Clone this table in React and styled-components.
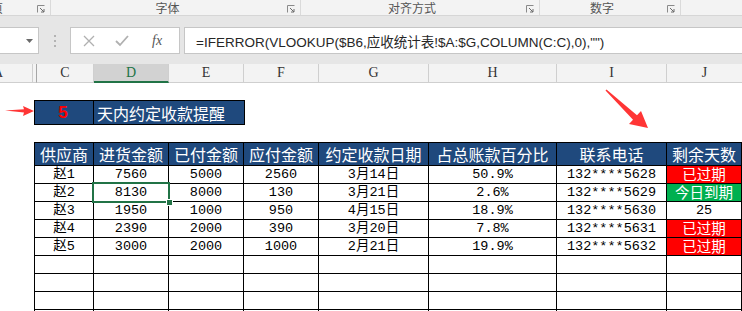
import React from 'react'
import styled, { createGlobalStyle } from 'styled-components'

const GlobalStyle = createGlobalStyle`
  html, body { margin: 0; padding: 0; background: #fff; overflow: hidden; }
  body { font-family: "Liberation Sans", "Noto Sans CJK SC", sans-serif; }
`

const Page = styled.div`
  width: 742px;
  height: 311px;
  position: relative;
  overflow: hidden;
`

const Ribbon = styled.div`
  display: flex;
  height: 15px;
  background: #f3f3f3;
  border-bottom: 1px solid #d6d6d6;
`

const Group = styled.div`
  width: ${p => p.$w}px;
  flex-shrink: 0;
  position: relative;
  display: flex;
  align-items: center;
  justify-content: ${p => p.$left ? 'flex-start' : 'center'};
  padding-right: ${p => p.$left ? 0 : 16}px;
  box-sizing: border-box;
  border-right: ${p => p.$last ? 'none' : '1px solid #dadada'};
  font-family: "Noto Sans CJK SC", sans-serif;
  font-size: 12px;
  line-height: 13px;
  color: #555;
  overflow: hidden;
`

const Launcher = styled.svg`
  position: absolute;
  right: 5px;
  top: 5px;
`

const FormulaRow = styled.div`
  height: 48px;
  background: #e6e6e6;
  display: flex;
  align-items: flex-start;
  padding-top: 11px;
  box-sizing: border-box;
`

const NameBox = styled.div`
  width: 40px;
  height: 27px;
  margin-left: -1px;
  box-sizing: border-box;
  background: #fff;
  border: 1px solid #c6c6c6;
  display: flex;
  align-items: center;
  justify-content: flex-end;
  padding-right: 5px;
`

const Dots = styled.div`
  width: 31px;
  height: 27px;
  display: flex;
  flex-direction: column;
  align-items: center;
  justify-content: center;
  gap: 3px;
  span {
    width: 2px;
    height: 2px;
    background: #b3b3b3;
  }
`

const ButtonBox = styled.div`
  width: 110px;
  height: 27px;
  box-sizing: border-box;
  background: #fff;
  border: 1px solid #c6c6c6;
  display: flex;
  align-items: center;
  padding-left: 12px;
  gap: 20px;
  color: #a8a8a8;
`

const Fx = styled.span`
  font-family: "Liberation Serif", serif;
  font-style: italic;
  font-size: 14px;
  color: #555;
  margin-left: 3px;
`

const FormulaBox = styled.div`
  flex: 1;
  height: 27px;
  margin-left: 4px;
  box-sizing: border-box;
  background: #fff;
  border: 1px solid #c6c6c6;
  border-right: none;
  display: flex;
  align-items: center;
  padding-left: 11px;
  font-family: "Liberation Sans", "Noto Sans CJK SC", sans-serif;
  font-size: 13.5px;
  color: #262626;
  white-space: nowrap;
`

const ColHeaders = styled.div`
  display: flex;
  height: 19px;
  background: #e6e6e6;
`

const ColHead = styled.div`
  width: ${p => p.$w}px;
  flex-shrink: 0;
  box-sizing: border-box;
  border-right: 1px solid ${p => p.$dark ? '#a6a6a6' : '#cfcfcf'};
  background: ${p => p.$active ? '#d2d2d2' : '#f3f3f3'};
  border-bottom: ${p => p.$active ? '2px solid #217346' : '1px solid #cfcfcf'};
  color: ${p => p.$active ? '#217346' : '#333'};
  display: flex;
  align-items: center;
  justify-content: ${p => p.$cut ? 'flex-start' : 'center'};
  font-family: "Liberation Serif", serif;
  font-size: 14px;
  overflow: hidden;
`

const Sheet = styled.div`
  position: relative;
  padding: 17px 0 0 34px;
`

const Title = styled.div`
  display: flex;
  width: 211px;
  height: 25px;
  box-sizing: border-box;
  border: 1px solid #000;
  background: #1f497d;
`

const TitleNum = styled.div`
  width: 59px;
  box-sizing: border-box;
  border-right: 1px solid #000;
  display: flex;
  align-items: center;
  justify-content: center;
  color: #ff0000;
  font-family: "Liberation Sans", sans-serif;
  font-weight: bold;
  font-size: 17px;
  padding-right: 2px;
`

const TitleText = styled.div`
  flex: 1;
  display: flex;
  align-items: center;
  padding-left: 3px;
  color: #fff;
  font-family: "Noto Sans CJK SC", sans-serif;
  font-size: 16px;
`

const Grid = styled.div`
  margin-top: 17px;
  display: grid;
  grid-template-columns: 59px 75px 75px 75px 110px 128px 110px 75px;
  border-left: 1px solid #000;
  border-top: 1px solid #000;
  width: 708px;
`

const Cell = styled.div`
  position: relative;
  height: ${p => p.$head ? 23 : 18}px;
  box-sizing: border-box;
  border-right: 1px solid #000;
  border-bottom: 1px solid #000;
  background: ${p => p.$bg || (p.$head ? '#1f497d' : '#fff')};
  color: ${p => p.$color || (p.$head ? '#fff' : '#000')};
  display: flex;
  align-items: center;
  justify-content: center;
  font-family: ${p => p.$cjk ? '"Noto Sans CJK SC", sans-serif' : '"Liberation Mono", "Noto Sans CJK SC", monospace'};
  font-size: ${p => p.$head ? 16 : p.$cjk ? 14.5 : 13.5}px;
  line-height: 1;
  white-space: nowrap;
`

const Selection = styled.div`
  position: absolute;
  z-index: 2;
  left: -2px;
  top: -2px;
  right: -2px;
  bottom: -2px;
  border: 2px solid #217346;
  pointer-events: none;
`

const Handle = styled.div`
  position: absolute;
  right: -5px;
  bottom: -5px;
  width: 5px;
  height: 5px;
  background: #217346;
  border: 1px solid #fff;
`

const Arrows = styled.svg`
  position: absolute;
  left: 0;
  top: 0;
  z-index: 3;
  pointer-events: none;
`

const headers = ['供应商', '进货金额', '已付金额', '应付金额', '约定收款日期', '占总账款百分比', '联系电话', '剩余天数']

const rows = [
  ['赵1', '7560', '5000', '2560', '3月14日', '50.9%', '132****5628', 'late'],
  ['赵2', '8130', '8000', '130', '3月21日', '2.6%', '132****5629', 'today'],
  ['赵3', '1950', '1000', '950', '4月15日', '18.9%', '132****5630', '25'],
  ['赵4', '2390', '2000', '390', '3月20日', '7.8%', '132****5631', 'late'],
  ['赵5', '3000', '2000', '1000', '2月21日', '19.9%', '132****5632', 'late'],
]

const cols = [
  { k: 'A', w: 33, cut: true },
  { k: '', w: 4, dark: true },
  { k: 'C', w: 57 },
  { k: 'D', w: 75, active: true },
  { k: 'E', w: 75 },
  { k: 'F', w: 75 },
  { k: 'G', w: 110 },
  { k: 'H', w: 128 },
  { k: 'I', w: 110 },
  { k: 'J', w: 76 },
]

function LauncherIcon() {
  return (
    <Launcher width="8" height="8" viewBox="0 0 8 8">
      <path d="M0.5 7.5V0.5H7.5" fill="none" stroke="#8a8a8a" strokeWidth="1" />
      <path d="M3 3L7 7M7 4V7H4" fill="none" stroke="#6a6a6a" strokeWidth="1" />
    </Launcher>
  )
}

function StatusCell({ value }) {
  if (value === 'late') return <Cell $cjk $bg="#ff0000" $color="#fff">已过期</Cell>
  if (value === 'today') return <Cell $cjk $bg="#00b050" $color="#fff">今日到期</Cell>
  return <Cell>{value}</Cell>
}

export default function App() {
  return (
    <Page>
      <GlobalStyle />
      <Ribbon>
        <Group $w={51} $left>
          <span style={{ marginLeft: -9 }}>页</span>
          <LauncherIcon />
        </Group>
        <Group $w={250}>字体<LauncherIcon /></Group>
        <Group $w={239}>对齐方式<LauncherIcon /></Group>
        <Group $w={141}>数字<LauncherIcon /></Group>
        <Group $w={61} $last />
      </Ribbon>
      <FormulaRow>
        <NameBox>
          <svg width="7" height="4" viewBox="0 0 7 4"><path d="M0 0H7L3.5 4Z" fill="#6a6a6a" /></svg>
        </NameBox>
        <Dots><span /><span /><span /></Dots>
        <ButtonBox>
          <svg width="12" height="12" viewBox="0 0 12 12">
            <path d="M1 1L11 11M11 1L1 11" stroke="#b0b0b0" strokeWidth="1.3" />
          </svg>
          <svg width="14" height="12" viewBox="0 0 14 12">
            <path d="M1 6L5 10L13 1" fill="none" stroke="#b0b0b0" strokeWidth="1.8" />
          </svg>
          <Fx>fx</Fx>
        </ButtonBox>
        <FormulaBox>=IFERROR(VLOOKUP($B6,应收统计表!$A:$G,COLUMN(C:C),0),"")</FormulaBox>
      </FormulaRow>
      <ColHeaders>
        {cols.map((c, i) => (
          <ColHead key={i} $w={c.w} $active={c.active} $cut={c.cut} $dark={c.dark}>
            {c.cut ? <span style={{ marginLeft: -7 }}>{c.k}</span> : c.k}
          </ColHead>
        ))}
      </ColHeaders>
      <Sheet>
        <Title>
          <TitleNum>5</TitleNum>
          <TitleText>天内约定收款提醒</TitleText>
        </Title>
        <Grid>
          {headers.map(h => <Cell key={h} $head $cjk>{h}</Cell>)}
          {rows.map((r, ri) => (
            <React.Fragment key={ri}>
              {r.slice(0, 7).map((v, ci) => (
                <Cell key={ci}>
                  {v}
                  {ri === 1 && ci === 1 && <Selection><Handle /></Selection>}
                </Cell>
              ))}
              <StatusCell value={r[7]} />
            </React.Fragment>
          ))}
          {Array.from({ length: 32 }).map((_, i) => <Cell key={'e' + i} />)}
        </Grid>
      </Sheet>
      <Arrows width="742" height="311" viewBox="0 0 742 311">
        <polygon points="5,110.5 24,109.2 23,106 34,111 23,116 24,112.5" fill="#ff3535" />
        <polygon points="605.5,90.5 606.5,89.5 637,115.2 641,111 648,128 629,124 633,119.8" fill="#ff3535" />
      </Arrows>
    </Page>
  )
}
